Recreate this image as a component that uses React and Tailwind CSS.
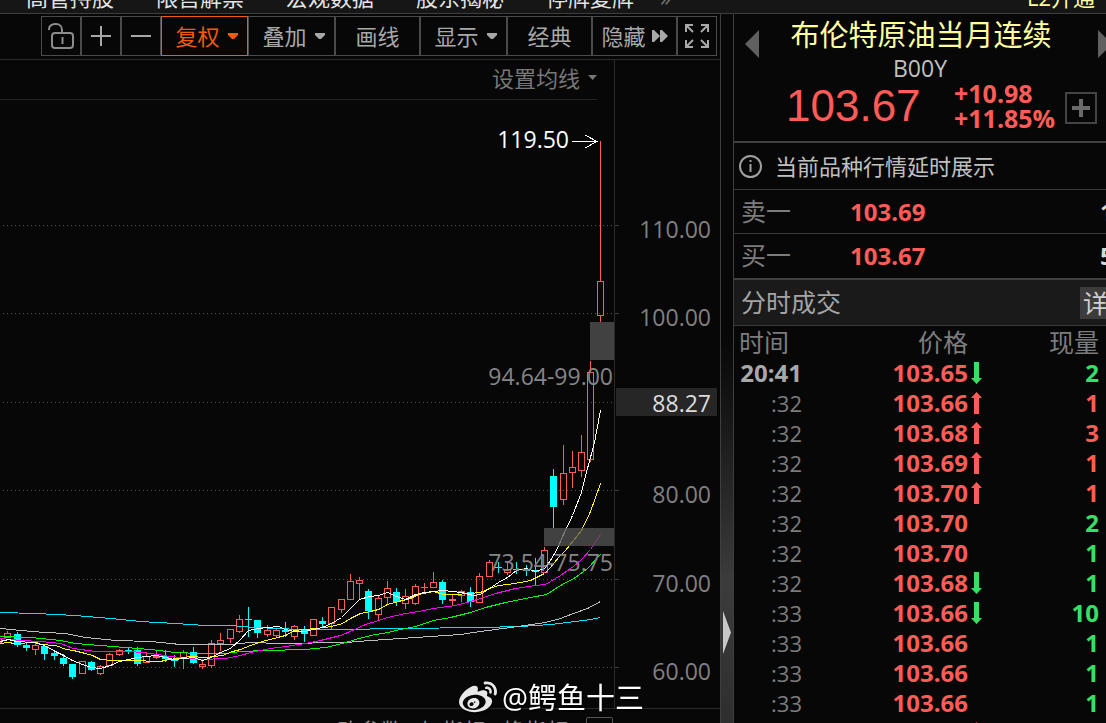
import React from "react";
import { FaWeibo } from "react-icons/fa";

const menuItems = ["高管持股", "限售解禁", "宏观数据", "股东揭秘", "停牌复牌"];

const RED = "#ff5b57";
const CYAN = "#00ffff";

// x, rising, high, body top, body bottom, low
const candles = [
  [-2, 1, 635, 638, 643, 646],
  [7, 1, 631, 633, 638, 638],
  [17, 0, 632, 634, 645, 647],
  [26, 0, 643, 645, 648, 651],
  [35, 1, 642, 645, 650, 655],
  [44, 0, 645, 646, 654, 660],
  [54, 0, 651, 653, 656, 660],
  [63, 0, 654, 658, 664, 666],
  [72, 0, 664, 664, 677, 679],
  [82, 1, 661, 661, 674, 674],
  [91, 0, 661, 662, 670, 671],
  [100, 1, 665, 666, 674, 675],
  [109, 1, 653, 654, 666, 666],
  [119, 1, 649, 650, 655, 656],
  [128, 0, 648, 650, 651, 654],
  [137, 0, 647, 650, 664, 666],
  [146, 1, 652, 656, 663, 663],
  [156, 1, 651, 656, 658, 659],
  [165, 0, 650, 656, 659, 662],
  [174, 0, 655, 660, 661, 667],
  [183, 1, 650, 652, 659, 669],
  [193, 0, 647, 652, 663, 664],
  [202, 1, 659, 664, 667, 669],
  [211, 1, 640, 643, 666, 668],
  [220, 1, 633, 640, 644, 651],
  [230, 1, 629, 629, 639, 643],
  [239, 1, 615, 619, 632, 633],
  [248, 0, 607, 619, 620, 637],
  [257, 0, 620, 620, 633, 638],
  [267, 1, 625, 630, 635, 637],
  [276, 1, 628, 630, 636, 637],
  [285, 0, 622, 630, 632, 637],
  [294, 1, 625, 626, 637, 640],
  [304, 0, 626, 629, 634, 642],
  [313, 1, 619, 619, 636, 636],
  [322, 0, 617, 621, 624, 627],
  [331, 1, 607, 607, 624, 629],
  [341, 1, 599, 599, 610, 613],
  [350, 1, 574, 581, 600, 600],
  [359, 1, 577, 580, 584, 599],
  [368, 0, 589, 591, 611, 619],
  [378, 1, 595, 598, 615, 621],
  [387, 1, 581, 588, 598, 605],
  [396, 0, 588, 592, 602, 606],
  [405, 1, 589, 596, 604, 609],
  [415, 1, 584, 586, 604, 605],
  [424, 1, 583, 587, 588, 592],
  [433, 1, 572, 582, 588, 588],
  [442, 0, 580, 582, 600, 604],
  [452, 1, 595, 599, 601, 606],
  [461, 1, 590, 591, 596, 602],
  [470, 0, 587, 592, 602, 607],
  [479, 1, 573, 576, 603, 603],
  [489, 1, 560, 562, 577, 577],
  [498, 0, 562, 567, 568, 573],
  [507, 1, 563, 569, 573, 575],
  [516, 0, 562, 569, 570, 574],
  [526, 0, 565, 570, 571, 576],
  [535, 0, 558, 570, 572, 585],
  [544, 1, 547, 550, 573, 573],
  [553, 0, 469, 476, 507, 528],
  [563, 1, 445, 473, 500, 505],
  [572, 1, 451, 467, 473, 488],
  [581, 1, 435, 452, 471, 477],
  [590, 1, 361, 372, 460, 462],
  [600, 1, 141, 281, 316, 322],
];

const averages = [
  {
    color: "#00e5ff",
    points:
      "0,612 35,613 75,615 110,618 140,621 175,623 205,625 230,625 255,627 300,629 340,629 400,628 480,627 520,626 550,624 575,621 590,619 600,617",
  },
  {
    color: "#bdbdbd",
    points:
      "0,628 20,630 45,632 65,633 85,637 115,640 150,641 180,644 230,644 250,642 280,643 345,642 370,640 400,638 430,636 460,634 480,631 510,627 545,622 560,618 573,613 587,608 600,601",
  },
  {
    color: "#00ff00",
    points:
      "0,636 30,637 60,640 75,643 100,645 125,647 150,649 175,652 200,653 225,653 240,651 265,650 305,649 325,647 342,643 355,639 370,635 387,632 400,629 415,626 433,620 450,617 470,612 485,607 505,602 530,597 546,594 560,585 575,577 587,568 600,554",
  },
  {
    color: "#ff00ff",
    points:
      "0,638 20,640 40,641 60,643 73,648 95,651 130,651 150,653 170,656 190,658 200,659 225,658 240,655 250,652 270,648 285,646 305,643 320,640 340,635 352,630 365,624 378,620 387,617 405,613 418,611 433,608 455,605 470,601 480,598 495,593 515,588 535,585 545,584 560,575 573,566 581,559 590,549 600,534",
  },
  {
    color: "#ffff00",
    points:
      "0,643 8,642 14,643 36,642 40,644 55,645 66,649 73,650 85,653 92,655 100,659 112,660 130,660 160,661 168,659 178,658 190,656 205,657 222,655 232,651 240,649 250,645 262,641 277,637 285,635 294,630 304,629 325,627 335,625 342,623 350,618 360,613 370,611 378,609 387,604 398,601 410,598 418,594 433,591 443,594 453,594 470,593 480,592 489,588 498,585 507,584 520,582 530,580 544,573 550,567 558,557 565,550 573,540 581,530 590,511 600,483",
  },
  {
    color: "#ffffff",
    points:
      "0,641 8,639 16,641 33,642 42,644 55,651 63,655 72,660 82,664 91,667 100,668 110,665 119,661 128,659 137,657 146,656 156,655 165,657 174,659 184,658 193,657 202,660 211,657 220,652 230,648 240,639 248,630 258,628 267,627 278,626 285,629 294,631 304,631 313,629 322,627 331,623 341,617 351,607 359,599 369,596 378,595 387,592 396,596 405,599 415,594 424,592 433,591 443,590 452,591 461,592 473,595 480,594 489,588 498,582 507,577 516,570 526,568 535,571 544,568 550,560 556,550 563,534 572,515 581,492 587,468 594,442 600,410",
  },
];

const gridLines = [225, 313, 402, 490, 579, 667];

const axisLabels = [
  [225, "110.00"],
  [313, "100.00"],
  [490, "80.00"],
  [579, "70.00"],
  [667, "60.00"],
];

const quotes = [
  { label: "卖一", price: "103.69", volume: "1" },
  { label: "买一", price: "103.67", volume: "5" },
];

const trades = [
  { time: "20:41", price: "103.65", dir: "down", volume: 2, side: "sell" },
  { time: ":32", price: "103.66", dir: "up", volume: 1, side: "buy" },
  { time: ":32", price: "103.68", dir: "up", volume: 3, side: "buy" },
  { time: ":32", price: "103.69", dir: "up", volume: 1, side: "buy" },
  { time: ":32", price: "103.70", dir: "up", volume: 1, side: "buy" },
  { time: ":32", price: "103.70", volume: 2, side: "sell" },
  { time: ":32", price: "103.70", volume: 1, side: "sell" },
  { time: ":32", price: "103.68", dir: "down", volume: 1, side: "sell" },
  { time: ":33", price: "103.66", dir: "down", volume: 10, side: "sell" },
  { time: ":33", price: "103.66", volume: 1, side: "sell" },
  { time: ":33", price: "103.66", volume: 1, side: "sell" },
  { time: ":33", price: "103.66", volume: 1, side: "sell" },
  { time: ":33", price: "103.68", dir: "up", volume: 1, side: "buy" },
];

const Caret = () => (
  <svg className="shrink-0" width="10" height="6" viewBox="0 0 10 6" fill="currentColor">
    <path d="M0 0h10v2L6 6H4L0 2z" />
  </svg>
);

const ToolButton = ({ className, children, ...rest }) => (
  <button
    type="button"
    className={`flex h-10 shrink-0 items-center justify-center border text-[22px] leading-none ${className}`}
    {...rest}
  >
    {children}
  </button>
);

const Toolbar = () => (
  <div className="flex h-[46px] shrink-0 justify-end border-b border-[#2a2a2a] pt-[2px] pr-[3px] text-[#a8a8a8]">
    <ToolButton className="w-10 border-[#4a4a4a]" aria-label="解锁">
      <svg width="26" height="26" viewBox="0 0 26 26" fill="none" stroke="#8c8c8c" strokeWidth="2">
        <path d="M1 7V6C1 3 4 1 7 1h1c4 0 6 3 6 6v3" />
        <rect x="4" y="10" width="21" height="15" rx="3" />
        <path d="M14.500 14v7" />
      </svg>
    </ToolButton>
    <ToolButton className="w-10 border-[#4a4a4a]" aria-label="放大">
      <svg width="20" height="20" viewBox="0 0 20 20" stroke="currentColor" strokeWidth="2">
        <path d="M0 10h20M10 0v20" />
      </svg>
    </ToolButton>
    <ToolButton className="w-10 border-[#4a4a4a]" aria-label="缩小">
      <svg width="20" height="20" viewBox="0 0 20 20" stroke="currentColor" strokeWidth="2">
        <path d="M0 10h20" />
      </svg>
    </ToolButton>
    <ToolButton className="w-[87px] gap-2 border-[#f25a0c] pl-1 text-[#f25a0c]">
      复权
      <Caret />
    </ToolButton>
    <ToolButton className="w-[87px] gap-2 border-[#4a4a4a] pl-1">
      叠加
      <Caret />
    </ToolButton>
    <ToolButton className="w-[85px] border-[#4a4a4a]">画线</ToolButton>
    <ToolButton className="w-[87px] gap-2 border-[#4a4a4a] pl-1">
      显示
      <Caret />
    </ToolButton>
    <ToolButton className="w-[85px] border-[#4a4a4a]">经典</ToolButton>
    <ToolButton className="w-[85px] gap-[6px] border-[#4a4a4a]">
      隐藏
      <svg width="16" height="12" viewBox="0 0 16 12" fill="currentColor">
        <path d="M0 0h2l6 6-6 6H0zM8 0h2l6 6-6 6H8z" />
      </svg>
    </ToolButton>
    <ToolButton className="w-10 border-[#4a4a4a]" aria-label="全屏">
      <svg width="26" height="26" viewBox="0 0 26 26" fill="none" stroke="currentColor" strokeWidth="2">
        <path d="M2 9V2h7M2 2l7 7M17 2h7v7M24 2l-7 7M2 17v7h7M2 24l7-7M24 17v7h-7M24 24l-7-7" />
      </svg>
    </ToolButton>
  </div>
);

const Candle = ({ data }) => {
  const [x, rising, high, top, bottom, low] = data;
  const color = rising ? RED : CYAN;
  const hollow = rising && bottom - top > 2;

  return (
    <g fill={color} stroke="none">
      <rect x={x} y={high} width="1" height={Math.max(top - high, 0)} />
      <rect x={x} y={bottom} width="1" height={Math.max(low - bottom, 0)} />
      {hollow ? (
        <rect x={x - 2.5} y={top + 0.5} width="6" height={bottom - top - 1} fill="none" stroke={color} />
      ) : (
        <rect x={x - 3} y={top} width="7" height={bottom - top} />
      )}
    </g>
  );
};

const CandleChart = () => (
  <svg
    className="h-[608px] w-[614px] shrink-0 font-['Open_Sans','Noto_Sans',sans-serif]"
    viewBox="0 100 614 608"
    shapeRendering="crispEdges"
  >
    {gridLines.map((y) => (
      <line key={y} x1="3" x2="614" y1={y + 0.5} y2={y + 0.5} stroke="#505050" strokeDasharray="1 3" />
    ))}
    {candles.map((c) => (
      <Candle key={c[0]} data={c} />
    ))}
    {averages.map((a) => (
      <polyline key={a.color} points={a.points} fill="none" stroke={a.color} transform="translate(0.5 0.5)" />
    ))}
    <rect x="590" y="322" width="24" height="38" fill="#555" fillOpacity="0.75" />
    <rect x="544" y="528" width="70" height="18" fill="#555" fillOpacity="0.75" />
    <text x="613" y="385" textAnchor="end" fontSize="23" fill="#858585">
      94.64-99.00
    </text>
    <text x="613" y="571" textAnchor="end" fontSize="23" fill="#858585">
      73.54-75.75
    </text>
    <text x="569" y="148" textAnchor="end" fontSize="23" fill="#fff">
      119.50
    </text>
    <path d="M572 141.500h24M585 135l12 6.500-12 6.500" fill="none" stroke="#fff" />
  </svg>
);

const PriceAxis = () => (
  <svg
    className="h-[648px] w-[105px] shrink-0 font-['Open_Sans','Noto_Sans',sans-serif]"
    viewBox="615 60 105 648"
    fontSize="23"
    textAnchor="end"
  >
    {axisLabels.map(([y, label]) => (
      <g key={label}>
        <path d={`M615 ${y + 0.5}h4`} stroke="#3a3a3a" />
        <text x="711" y={y + 13} fill="#808080">
          {label}
        </text>
      </g>
    ))}
    <rect x="616" y="388" width="101" height="28" rx="1" fill="#262626" />
    <text x="711" y="412" fill="#dcdcdc">
      88.27
    </text>
  </svg>
);

const ChartPanel = () => (
  <main className="relative flex min-w-0 flex-1 flex-col overflow-hidden">
    <Toolbar />
    <div className="flex shrink-0 border-b border-[#2a2a2a]">
      <div className="min-w-0 flex-1 border-r border-[#2a2a2a]">
        <div className="mr-[17px] flex h-10 items-center justify-end border-b border-[#242424] pb-1">
          <button type="button" className="flex items-center gap-2 text-[22px] leading-none text-[#777]">
            设置均线
            <svg width="9" height="5" viewBox="0 0 9 5" fill="currentColor">
              <path d="M0 0h9L4.500 5z" />
            </svg>
          </button>
        </div>
        <div className="flex justify-end overflow-hidden">
          <CandleChart />
        </div>
      </div>
      <PriceAxis />
    </div>
    <div className="flex shrink-0 justify-end gap-[17px] pt-[8px] pr-[107px] text-[22px] leading-[26px] text-[#8a8a8a]">
      <button type="button" className="shrink-0">改参数</button>
      <button type="button" className="shrink-0">加指标</button>
      <button type="button" className="shrink-0">换指标</button>
      <button type="button" aria-label="关闭" className="h-[26px] w-[27px] shrink-0 rounded-xs border border-[#555]" />
    </div>
    <div className="absolute right-[76px] bottom-[6px] flex items-center gap-[5px] text-white drop-shadow-[1px_1px_1px_#000]">
      <FaWeibo className="text-[38px] text-[#e8e8e8]" />
      <span className="text-[29px] leading-[38px]">@鳄鱼十三</span>
    </div>
  </main>
);

const Splitter = () => (
  <div className="flex w-[14px] shrink-0 flex-col border-x border-[#3e3e3e] bg-linear-to-b from-[#070707] from-45% via-[#3c3c3c] via-80% to-[#2e2e2e]">
    <button type="button" aria-label="收起" className="mt-[597px] ml-[2px] text-[#c8c8c8]">
      <svg width="8" height="43" viewBox="0 0 8 43" fill="currentColor">
        <path d="M0 0l8 21.500L0 43z" />
      </svg>
    </button>
  </div>
);

const Arrow = ({ dir }) => (
  <svg
    className={dir === "up" ? "text-[#ff5b57]" : "text-[#35e065]"}
    width="11"
    height="22"
    viewBox="0 0 11 22"
    fill="currentColor"
  >
    {dir === "up" ? <path d="M5.500 0L11 6H8v16H3V6H0z" /> : <path d="M3 0h5v16h3l-5.500 6L0 16h3z" />}
  </svg>
);

const QuotePanel = () => (
  <aside className="w-[372px] shrink-0 overflow-hidden whitespace-nowrap">
    <section className="h-[129px] border-b-2 border-[#404040]">
      <div className="flex h-10 items-center pl-[11px] text-[#606060]">
        <button type="button" aria-label="上一个" className="mt-4 shrink-0 self-start">
          <svg width="14" height="28" viewBox="0 0 14 28" fill="currentColor">
            <path d="M14 0v28L0 14z" />
          </svg>
        </button>
        <h1 className="w-[324px] shrink-0 text-center text-[29px] leading-none text-[#ffff9e]">布伦特原油当月连续</h1>
        <button type="button" aria-label="下一个" className="mt-4 ml-[15px] shrink-0 self-start">
          <svg width="14" height="28" viewBox="0 0 14 28" fill="currentColor">
            <path d="M0 0v28l14-14z" />
          </svg>
        </button>
      </div>
      <p className="h-7 text-center text-[23px] leading-7 text-[#c0c0c0]">B00Y</p>
      <div className="flex h-[52px] items-center pl-[52px] text-[#ff5b57]">
        <span className="w-[168px] shrink-0 pb-1 font-['Liberation_Sans',sans-serif] text-[44px] leading-none">103.67</span>
        <div className="w-[111px] shrink-0 pb-1 text-[25px] leading-[25px] font-bold">
          <p>+10.98</p>
          <p>+11.85%</p>
        </div>
        <button
          type="button"
          aria-label="添加自选"
          className="flex size-8 shrink-0 items-center justify-center border-2 border-[#444] text-[#6a6a6a]"
        >
          <svg width="18" height="18" viewBox="0 0 18 18" stroke="currentColor" strokeWidth="4">
            <path d="M0 9h18M9 0v18" />
          </svg>
        </button>
      </div>
    </section>

    <div className="flex h-[47px] items-center gap-[13px] border-b border-[#3a3a3a] pl-[5px] text-[22px] text-[#c0c0c0]">
      <svg width="23" height="23" viewBox="0 0 23 23" fill="none" stroke="#a0a0a0" strokeWidth="2">
        <circle cx="11.500" cy="11.500" r="10.500" />
        <path d="M11.500 5v2M11.500 9v8" />
      </svg>
      当前品种行情延时展示
    </div>

    {quotes.map((q, i) => (
      <div
        key={q.label}
        className={
          i === 0
            ? "flex h-11 items-center border-b border-[#3a3a3a] pl-[7px]"
            : "flex h-[46px] items-center border-b-2 border-[#404040] pl-[7px]"
        }
      >
        <span className="w-[109px] shrink-0 text-[25px] text-[#7c7c7c]">{q.label}</span>
        <span className="w-[250px] shrink-0 text-2xl font-bold text-[#ff5b57]">{q.price}</span>
        <span className="text-2xl font-bold text-[#d8d8d8]">{q.volume}</span>
      </div>
    ))}

    <div className="flex h-[46px] items-center border-b border-[#3a3a3a] bg-[#1a1a1a] pl-[7px]">
      <h2 className="w-[339px] shrink-0 text-[25px] text-[#a4a4a4]">分时成交</h2>
      <button type="button" className="h-8 shrink-0 bg-[#3c3c3c] px-[3px] text-[25px] leading-8 text-[#d0d0d0]">
        详细
      </button>
    </div>

    <table className="w-[365px] table-fixed text-2xl leading-[30px]">
      <thead>
        <tr className="h-8 text-[25px] text-[#7c7c7c]">
          <th className="w-[68px] pl-[5px] text-left font-normal">时间</th>
          <th className="w-[182px] pr-4 text-right font-normal">价格</th>
          <th className="text-right font-normal">现量</th>
        </tr>
      </thead>
      <tbody>
        {trades.map((t, i) => (
          <tr key={i} className="h-[30px]">
            <td className={i === 0 ? "text-right font-bold text-[#a8a8a8]" : "text-right text-[22px] text-[#7c7c7c]"}>
              {t.time}
            </td>
            <td className="font-bold text-[#ff5b57]">
              <div className="flex items-center justify-end gap-[3px]">
                {t.price}
                <span className="w-[13px]">{t.dir && <Arrow dir={t.dir} />}</span>
              </div>
            </td>
            <td className={t.side === "buy" ? "text-right font-bold text-[#ff5b57]" : "text-right font-bold text-[#35e065]"}>
              {t.volume}
            </td>
          </tr>
        ))}
      </tbody>
    </table>
  </aside>
);

export default function App() {
  return (
    <div className="flex h-screen flex-col overflow-hidden bg-[#070707] font-['Open_Sans','Noto_Sans_CJK_SC',sans-serif]">
      <header className="flex h-[14px] shrink-0 items-end justify-between overflow-hidden border-b border-[#3e3e3e] bg-[#161616] pr-[11px] pb-[5px] pl-[26px] text-[22px] leading-[22px] whitespace-nowrap text-[#e4e4e4]">
        <nav className="flex gap-[42px]">
          {menuItems.map((item) => (
            <a key={item} href="#">
              {item}
            </a>
          ))}
          <a href="#" className="-ml-[16px] text-[#777]">
            »
          </a>
        </nav>
        <a href="#" className="text-[#ffff9e]">
          L2开通
        </a>
      </header>
      <div className="flex min-h-0 flex-1">
        <ChartPanel />
        <Splitter />
        <QuotePanel />
      </div>
    </div>
  );
}
